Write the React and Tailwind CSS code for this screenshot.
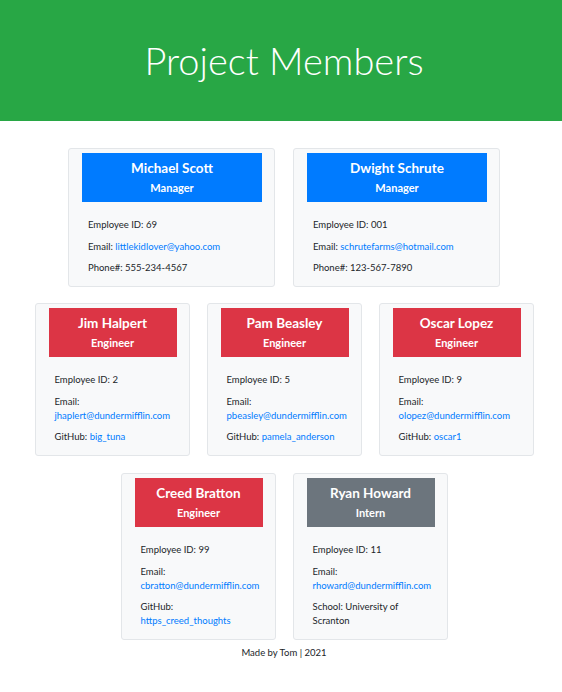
import React from 'react';

const members = [
  [
    { name: 'Michael Scott', role: 'Manager', id: '69', email: 'littlekidlover@yahoo.com', extra: { label: 'Phone#:', value: '555-234-4567' } },
    { name: 'Dwight Schrute', role: 'Manager', id: '001', email: 'schrutefarms@hotmail.com', extra: { label: 'Phone#:', value: '123-567-7890' } },
  ],
  [
    { name: 'Jim Halpert', role: 'Engineer', id: '2', email: 'jhaplert@dundermifflin.com', extra: { label: 'GitHub:', value: 'big_tuna', link: true } },
    { name: 'Pam Beasley', role: 'Engineer', id: '5', email: 'pbeasley@dundermifflin.com', extra: { label: 'GitHub:', value: 'pamela_anderson', link: true } },
    { name: 'Oscar Lopez', role: 'Engineer', id: '9', email: 'olopez@dundermifflin.com', extra: { label: 'GitHub:', value: 'oscar1', link: true } },
  ],
  [
    { name: 'Creed Bratton', role: 'Engineer', id: '99', email: 'cbratton@dundermifflin.com', extra: { label: 'GitHub:', value: 'https_creed_thoughts', link: true, wrap: true } },
    { name: 'Ryan Howard', role: 'Intern', id: '11', email: 'rhoward@dundermifflin.com', extra: { label: 'School:', value: 'University of', rest: 'Scranton' } },
  ],
];

const roleColor = {
  Manager: 'bg-[#007bff]',
  Engineer: 'bg-[#dc3545]',
  Intern: 'bg-[#6c757d]',
};

// carte d'un membre
const MemberCard = ({ m, wide }) => {
  return (
    <div className={`${wide ? 'w-[207px]' : 'w-[155px]'} border border-[#e3e6e9] rounded-[3px] bg-[#f8f9fa] pt-[4px] pl-[13px] pr-[12px]`}>
      <div className={`${roleColor[m.role]} h-[49px] flex flex-col items-center text-white font-bold`}>
        <div className="text-[13.5px] leading-[18px] mt-[6px]">{m.name}</div>
        <div className="text-[11px] leading-[14px] mt-[4px]">{m.role}</div>
      </div>
      <div className="pl-[6px] pt-[16px] pb-[11px] text-[9.5px] leading-[14px] text-[#212529]">
        <p>Employee ID: {m.id}</p>
        <p className="mt-[7.5px]">
          Email:{wide ? ' ' : <br />}
          <a className="text-[#007bff]">{m.email}</a>
        </p>
        <p className="mt-[7.5px]">
          {m.extra.label}
          {m.extra.wrap ? <br /> : ' '}
          {m.extra.link ? <a className="text-[#007bff]">{m.extra.value}</a> : m.extra.value}
          {m.extra.rest && (
            <>
              <br />
              {m.extra.rest}
            </>
          )}
        </p>
      </div>
    </div>
  );
};

const App = () => {
  return (
    <div className="min-h-screen bg-white font-['Segoe_UI',Lato,'Liberation_Sans',sans-serif]">
      <header className="h-[121px] bg-[#28a745] flex items-center justify-center pl-[6px]">
        <h1 className="text-[38px] font-light text-white leading-none pb-[2px]">Project Members</h1>
      </header>

      <main className="pt-[27px] pl-[6px] flex flex-col items-center">
        <div className="flex gap-[18px]">
          {members[0].map((m) => <MemberCard key={m.name} m={m} wide />)}
        </div>
        <div className="flex gap-[17px] mt-[16px]">
          {members[1].map((m) => <MemberCard key={m.name} m={m} />)}
        </div>
        <div className="flex gap-[17px] mt-[17px]">
          {members[2].map((m) => <MemberCard key={m.name} m={m} />)}
        </div>
        <footer className="text-[9.5px] leading-[14px] text-[#212529] mt-[6px] pb-[20px]">Made by Tom | 2021</footer>
      </main>
    </div>
  );
};

export default App;
